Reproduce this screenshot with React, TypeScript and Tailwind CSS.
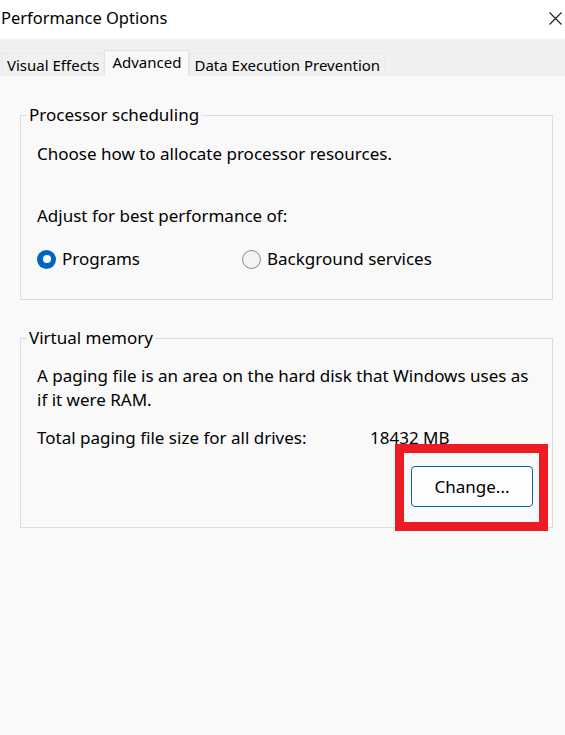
import React from 'react'

function Radio({ checked, label }: { checked: boolean; label: string }) {
  return (
    <label className="flex items-center gap-[6px]">
      {checked ? (
        <span className="w-[19px] h-[19px] rounded-full bg-[#0067c0] flex items-center justify-center">
          <span className="w-[8px] h-[8px] rounded-full bg-white" />
        </span>
      ) : (
        <span className="w-[19px] h-[19px] rounded-full border border-[#8a8a8a] bg-[#f3f3f3]" />
      )}
      <span>{label}</span>
    </label>
  )
}

export default function App() {
  const tabs = [
    { name: 'Visual Effects', active: false },
    { name: 'Advanced', active: true },
    { name: 'Data Execution Prevention', active: false },
  ]

  return (
    <div className="w-[565px] h-[735px] bg-[#f9f9f9] text-[17px] text-black font-['Noto_Sans',sans-serif]">
      <div className="h-[39px] bg-white flex items-center justify-between pl-[1px] pr-[2px]">
        <span className="text-[16.5px] leading-none -mt-[2px]">Performance Options</span>
        <svg width="13" height="13" viewBox="0 0 13 13" className="mr-[1px] -mt-[2px]">
          <path d="M0.5 0.5 L12.5 12.5 M12.5 0.5 L0.5 12.5" stroke="#1a1a1a" strokeWidth="1.1" />
        </svg>
      </div>

      <div className="h-[37px] bg-[#f0f0f0] flex items-end pl-[2px]">
        {tabs.map((t) =>
          t.active ? (
            <div
              key={t.name}
              className="h-[26px] px-[7px] bg-[#f9f9f9] border border-b-0 border-[#e3e3e3] flex items-center text-[15px] leading-none pb-[2px]"
            >
              {t.name}
            </div>
          ) : (
            <div
              key={t.name}
              className="h-[23px] px-[4px] border border-b-0 border-[#e3e3e3] border-dotted flex items-center text-[15px] leading-none"
            >
              {t.name}
            </div>
          )
        )}
      </div>

      <div className="px-[20px] pr-[12px] pt-[28px]">
        <fieldset className="border border-[#dcdcdc] pb-[28px]">
          <legend className="ml-[6px] px-[2px] leading-[22px]">Processor scheduling</legend>
          <div className="pl-[16px] pt-[16px] leading-[24px]">
            <p>Choose how to allocate processor resources.</p>
            <p className="mt-[38px]">Adjust for best performance of:</p>
            <div className="flex mt-[19px]">
              <div className="w-[205px]">
                <Radio checked label="Programs" />
              </div>
              <Radio checked={false} label="Background services" />
            </div>
          </div>
        </fieldset>

        <fieldset className="border border-[#dcdcdc] mt-[27px] pb-[20px]">
          <legend className="ml-[6px] px-[2px] leading-[22px]">Virtual memory</legend>
          <div className="pl-[16px] pr-[10px] pt-[15px] leading-[24px]">
            <p>A paging file is an area on the hard disk that Windows uses as if it were RAM.</p>
            <div className="flex mt-[14px]">
              <span className="w-[333px]">Total paging file size for all drives:</span>
              <span>18432 MB</span>
            </div>
            <div className="flex justify-end pr-[9px] mt-[16px]">
              <div className="relative">
                <button className="w-[122px] h-[41px] rounded-[4px] border border-[#0067c0] bg-[#fdfdfd] text-[17px]">
                  Change...
                </button>
                <div className="absolute -left-[16px] -top-[22px] -right-[15px] -bottom-[24px] border-[9px] border-[#ed1c24] pointer-events-none" />
              </div>
            </div>
          </div>
        </fieldset>
      </div>
    </div>
  )
}
